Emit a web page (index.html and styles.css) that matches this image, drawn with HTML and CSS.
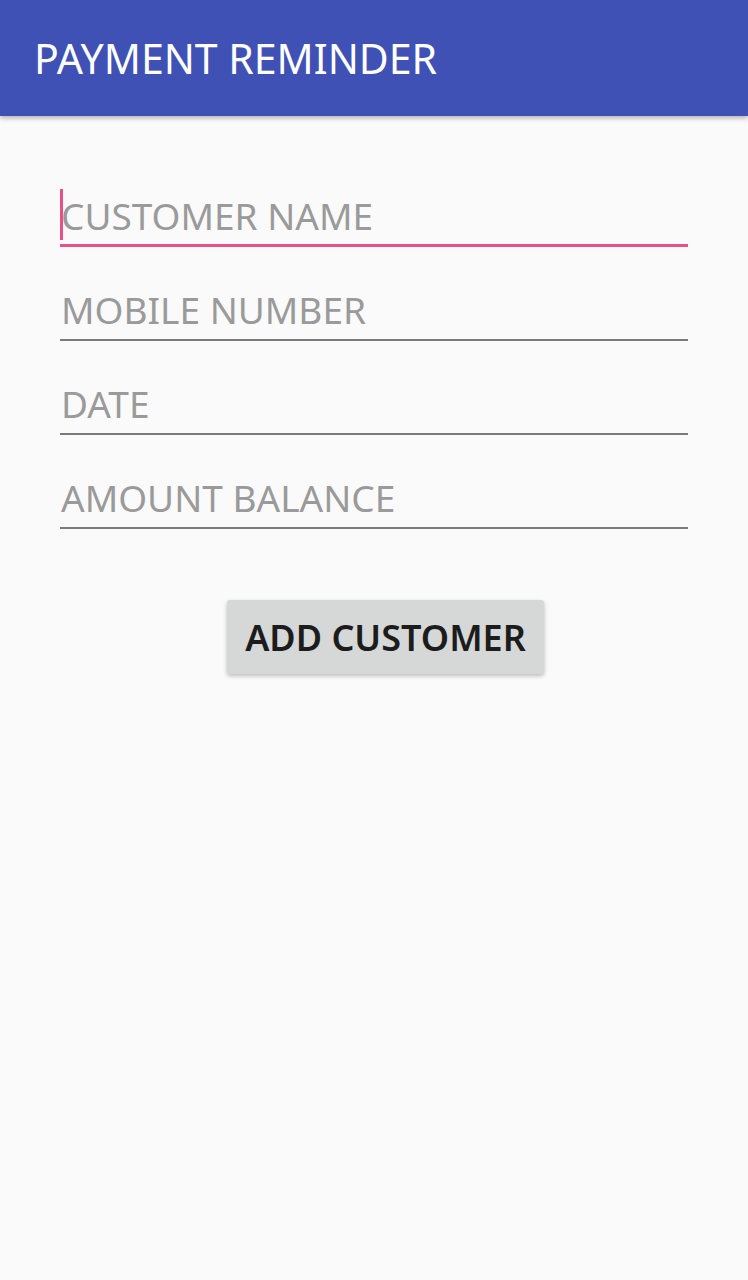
FILE: index.html
```html
<!DOCTYPE html>
<html>
<head>
<meta charset="utf-8">
<link rel="stylesheet" href="styles.css">
</head>
<body>
<header class="toolbar"><h1 class="title">PAYMENT REMINDER</h1></header>
<main class="form">
  <div class="field focused"><span class="cursor"></span><span class="hint">CUSTOMER NAME</span></div>
  <div class="field"><span class="hint">MOBILE NUMBER</span></div>
  <div class="field"><span class="hint">DATE</span></div>
  <div class="field"><span class="hint">AMOUNT BALANCE</span></div>
  <div class="actions"><button class="btn">ADD CUSTOMER</button></div>
</main>
</body>
</html>
```
FILE: styles.css
```css
html, body { margin: 0; padding: 0; }
body {
  background: #fafafa;
  font-family: "Noto Sans", "Open Sans", sans-serif;
  width: 748px;
  height: 1280px;
  overflow: hidden;
}
.toolbar {
  height: 116px;
  background: #3f51b5;
  box-shadow: 0 2px 5px rgba(0,0,0,0.3);
  display: flex;
  align-items: center;
  padding-left: 34px;
  position: relative;
  z-index: 1;
}
.title {
  margin: 0;
  color: #fff;
  font-weight: 400;
  font-size: 41px;
  letter-spacing: 0px;
}
.form {
  padding: 37px 60px 0 60px;
}
.field {
  height: 94px;
  box-sizing: border-box;
  border-bottom: 2px solid #7a7a7a;
  display: flex;
  align-items: flex-end;
  padding-bottom: 5px;
  position: relative;
}
.field.focused {
  border-bottom: 3px solid #e8508a;
  padding-bottom: 4px;
}
.hint {
  color: #9a9a9a;
  font-size: 37px;
  line-height: 48px;
  padding-left: 1px;
}
.cursor {
  position: absolute;
  left: 0;
  bottom: 4px;
  width: 3px;
  height: 51px;
  background: #e8508a;
}
.actions {
  display: flex;
  padding-top: 71px;
  padding-left: 167px;
}
.btn {
  width: 317px;
  height: 74px;
  border: none;
  border-radius: 3px;
  background: #d6d7d7;
  color: #1c1c1c;
  font-family: "Noto Sans", "Open Sans", sans-serif;
  font-size: 36px;
  font-weight: 600;
  box-shadow: 0 2px 4px rgba(0,0,0,0.25);
  padding: 0;
}
```
